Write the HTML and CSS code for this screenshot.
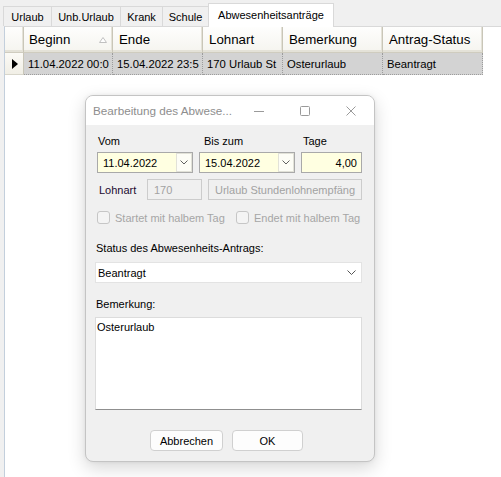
FILE: index.html
```html
<!DOCTYPE html>
<html lang="de">
<head>
<meta charset="utf-8">
<title>Abwesenheitsanträge</title>
<link rel="stylesheet" href="styles.css">
</head>
<body>
<div class="tabs">
  <div class="tab t1">Urlaub</div>
  <div class="tab t2">Unb.Urlaub</div>
  <div class="tab t3">Krank</div>
  <div class="tab t4">Schule</div>
  <div class="tab t5 active">Abwesenheitsanträge</div>
</div>
<div class="page">
  <div class="grid">
    <div class="row head">
      <div class="cell w-rh"></div>
      <div class="cell w1">Beginn<svg class="sort" width="8" height="6" viewBox="0 0 8 6"><polygon points="0.5,5.5 4,0.5 7.5,5.5" fill="#fff" stroke="#c0c0c0" stroke-width="1"/></svg></div>
      <div class="cell w2">Ende</div>
      <div class="cell w3">Lohnart</div>
      <div class="cell w4">Bemerkung</div>
      <div class="cell w5">Antrag-Status</div>
    </div>
    <div class="row data">
      <div class="cell w-rh rh"><svg width="6" height="10" viewBox="0 0 6 10"><polygon points="0,0 6,5 0,10" fill="#000"/></svg></div>
      <div class="cell w1">11.04.2022 00:0</div>
      <div class="cell w2">15.04.2022 23:5</div>
      <div class="cell w3">170 Urlaub St</div>
      <div class="cell w4">Osterurlaub</div>
      <div class="cell w5">Beantragt</div>
    </div>
  </div>
</div>

<div class="dialog">
  <div class="titlebar">
    <span class="title">Bearbeitung des Abwese...</span>
    <div class="caps">
      <span class="capbtn"><svg width="10" height="10" viewBox="0 0 10 10"><line x1="0" y1="5.5" x2="10" y2="5.5" stroke="#9a9a9a" stroke-width="1"/></svg></span>
      <span class="capbtn"><svg width="10" height="10" viewBox="0 0 10 10"><rect x="0.5" y="0.5" width="9" height="9" rx="1" fill="none" stroke="#9a9a9a" stroke-width="1"/></svg></span>
      <span class="capbtn"><svg width="10" height="10" viewBox="0 0 10 10"><path d="M0.5 0.5 L9.5 9.5 M9.5 0.5 L0.5 9.5" stroke="#9a9a9a" stroke-width="1"/></svg></span>
    </div>
  </div>
  <div class="dbody">
    <div class="line1">
      <span class="lbl lvom">Vom</span>
      <span class="lbl lbis">Bis zum</span>
      <span class="lbl ltage">Tage</span>
    </div>
    <div class="line1 inputs">
      <div class="field date">11.04.2022<span class="dd"><svg width="8" height="5" viewBox="0 0 8 5"><path d="M0.5 0.5 L4 4 L7.5 0.5" fill="none" stroke="#606060" stroke-width="1"/></svg></span></div>
      <div class="field date">15.04.2022<span class="dd"><svg width="8" height="5" viewBox="0 0 8 5"><path d="M0.5 0.5 L4 4 L7.5 0.5" fill="none" stroke="#606060" stroke-width="1"/></svg></span></div>
      <div class="field num">4,00</div>
    </div>
    <div class="line2">
      <span class="lohn">Lohnart</span>
      <div class="field dis dis1">170</div>
      <div class="field dis dis2">Urlaub Stundenlohnempfäng</div>
    </div>
    <div class="line3">
      <label class="chk c1"><span class="box"></span>Startet mit halbem Tag</label>
      <label class="chk"><span class="box"></span>Endet mit halbem Tag</label>
    </div>
    <div class="lbl2 status">Status des Abwesenheits-Antrags:</div>
    <div class="combo">Beantragt<svg width="9" height="5" viewBox="0 0 9 5"><path d="M0.5 0.5 L4.5 4.5 L8.5 0.5" fill="none" stroke="#555" stroke-width="1"/></svg></div>
    <div class="lbl2 bem">Bemerkung:</div>
    <div class="memo">Osterurlaub</div>
    <div class="buttons">
      <div class="btn b1">Abbrechen</div>
      <div class="btn b2">OK</div>
    </div>
  </div>
</div>
</body>
</html>
```

FILE: styles.css
```css
html, body {
  margin: 0;
  padding: 0;
}
body {
  width: 501px;
  height: 477px;
  overflow: hidden;
  position: relative;
  background: #f0f0f0;
  font-family: "Liberation Sans", Arial, sans-serif;
  font-size: 11px;
  color: #000;
}

/* Tabs */
.tabs {
  height: 26px;
  display: flex;
  align-items: flex-end;
  padding-left: 3px;
  box-sizing: border-box;
  position: relative;
  z-index: 2;
}
.tab {
  height: 20px;
  box-sizing: border-box;
  border: 1px solid #d9d9d9;
  border-bottom: none;
  margin-right: -1px;
  display: flex;
  align-items: center;
  justify-content: center;
  background: #f0f0f0;
  white-space: nowrap;
}
.tab.active {
  height: 24px;
  background: #fff;
  margin-bottom: -1px;
  padding-bottom: 1px;
}
.t1 { width: 49px; }
.t2 { width: 70px; }
.t3 { width: 43px; }
.t4 { width: 47px; }
.t5 { width: 126px; }

/* Tab page + grid */
.page {
  height: 451px;
  margin-left: 4px;
  box-sizing: border-box;
  border-top: 1px solid #d9d9d9;
  border-left: 1px solid #c3cfdc;
  background: #fff;
}
.row {
  display: flex;
}
.head { height: 26px; }
.data { height: 22px; }
.cell {
  box-sizing: border-box;
  overflow: hidden;
  white-space: nowrap;
  display: flex;
  align-items: center;
}
.head .cell {
  font-size: 13.3px;
  padding-left: 5px;
  background: linear-gradient(#fefefd, #f5f4ef);
  border-right: 1px solid #c9c6b8;
  border-bottom: 1px solid #cfccbf;
  box-shadow: inset 0 -2px 0 #e4e2d8, inset -1px 0 0 #e4e2d8;
}
.head .w2, .head .w3, .head .w4, .head .w5 { padding-left: 6px; }
.sort {
  margin-left: auto;
  margin-right: 5px;
  flex: none;
}
.data .cell {
  font-size: 11.3px;
  padding-left: 4px;
  background: #d3d3d3;
  border-right: 1px dotted #9c9c9c;
  border-bottom: 1px dotted #9c9c9c;
}
.data .rh {
  background: linear-gradient(#fbfaf6, #f1efe6);
  border-right: 1px solid #c9c6b8;
  border-bottom: 1px solid #d8d6cb;
  padding-left: 7px;
}
.w-rh { width: 19px; }
.w1 { width: 89px; }
.w2 { width: 90px; }
.w3 { width: 80px; }
.w4 { width: 100px; }
.w5 { width: 100px; }

/* Dialog window */
.dialog {
  position: absolute;
  left: 85px;
  top: 95px;
  width: 290px;
  height: 367px;
  box-sizing: border-box;
  border: 1px solid #c4c4c4;
  border-radius: 8px;
  overflow: hidden;
  background: #f0f0f0;
  box-shadow: 0 6px 18px rgba(0, 0, 0, 0.16), 0 0 4px rgba(0, 0, 0, 0.06);
  z-index: 5;
}
.titlebar {
  height: 29px;
  background: #fff;
  display: flex;
  align-items: center;
}
.title {
  padding-left: 7px;
  font-size: 11.7px;
  color: #8e8e8e;
  white-space: nowrap;
  flex: 1;
}
.caps {
  display: flex;
  height: 29px;
}
.capbtn {
  width: 46px;
  display: flex;
  align-items: center;
  justify-content: center;
}
.dbody {
  padding: 10px 0 0 11px;
}
.line1 {
  display: flex;
  gap: 6px;
}
.lbl {
  height: 13px;
  line-height: 13px;
  box-sizing: border-box;
}
.lvom { width: 96px; padding-left: 1px; }
.lbis { width: 96px; padding-left: 5px; }
.ltage { width: 61px; padding-left: 2px; }
.inputs {
  margin-top: 4px;
}
.field {
  height: 21px;
  box-sizing: border-box;
  display: flex;
  align-items: center;
  white-space: nowrap;
  overflow: hidden;
}
.date {
  width: 96px;
  border: 1px solid #a9a9a9;
  background: #ffffe1;
  padding-left: 5px;
  position: relative;
}
.dd {
  position: absolute;
  right: 0;
  top: 0;
  width: 16px;
  height: 19px;
  box-sizing: border-box;
  background: #fdfdf6;
  border: 1px solid #e2e2d8;
  display: flex;
  align-items: center;
  justify-content: center;
}
.num {
  width: 61px;
  border: 1px solid #a9a9a9;
  background: #ffffe1;
  justify-content: flex-end;
  padding-right: 4px;
}
.line2 {
  display: flex;
  align-items: center;
  margin-top: 6px;
}
.lohn {
  width: 50px;
  padding-left: 2px;
  box-sizing: border-box;
  color: #1c0b30;
}
.dis {
  border: 1px solid #cccccc;
  background: #f0f0f0;
  color: #a2a2a2;
  padding-left: 6px;
}
.dis1 { width: 55px; margin-right: 6px; }
.dis2 { width: 154px; }
.line3 {
  display: flex;
  align-items: center;
  margin-top: 11px;
  height: 13px;
}
.chk {
  display: flex;
  align-items: center;
  color: #a6a6a6;
  white-space: nowrap;
}
.chk.c1 { width: 139px; }
.box {
  width: 13px;
  height: 13px;
  box-sizing: border-box;
  border: 1px solid #c6c6c6;
  border-radius: 3px;
  background: #f4f4f4;
  margin-right: 5px;
  flex: none;
}
.lbl2 {
  height: 13px;
  line-height: 13px;
  margin-left: -1px;
}
.status { margin-top: 18px; }
.combo {
  margin-top: 7px;
  margin-left: -2px;
  width: 267px;
  height: 21px;
  box-sizing: border-box;
  border: 1px solid #e3e3e3;
  background: #fff;
  display: flex;
  align-items: center;
  justify-content: space-between;
  padding: 0 5px 0 2px;
}
.bem { margin-top: 15px; }
.memo {
  margin-top: 6px;
  margin-left: -2px;
  width: 267px;
  height: 93px;
  box-sizing: border-box;
  border: 1px solid #dcdcdc;
  border-bottom-color: #8f8f8f;
  background: #fff;
  padding: 3px 1px;
  line-height: 13px;
}
.buttons {
  display: flex;
  gap: 9px;
  margin-top: 20px;
  margin-left: 53px;
}
.btn {
  height: 21px;
  box-sizing: border-box;
  border: 1px solid #d0d0d0;
  border-radius: 4px;
  background: #fdfdfd;
  display: flex;
  align-items: center;
  justify-content: center;
}
.b1 { width: 73px; }
.b2 { width: 71px; }
```
